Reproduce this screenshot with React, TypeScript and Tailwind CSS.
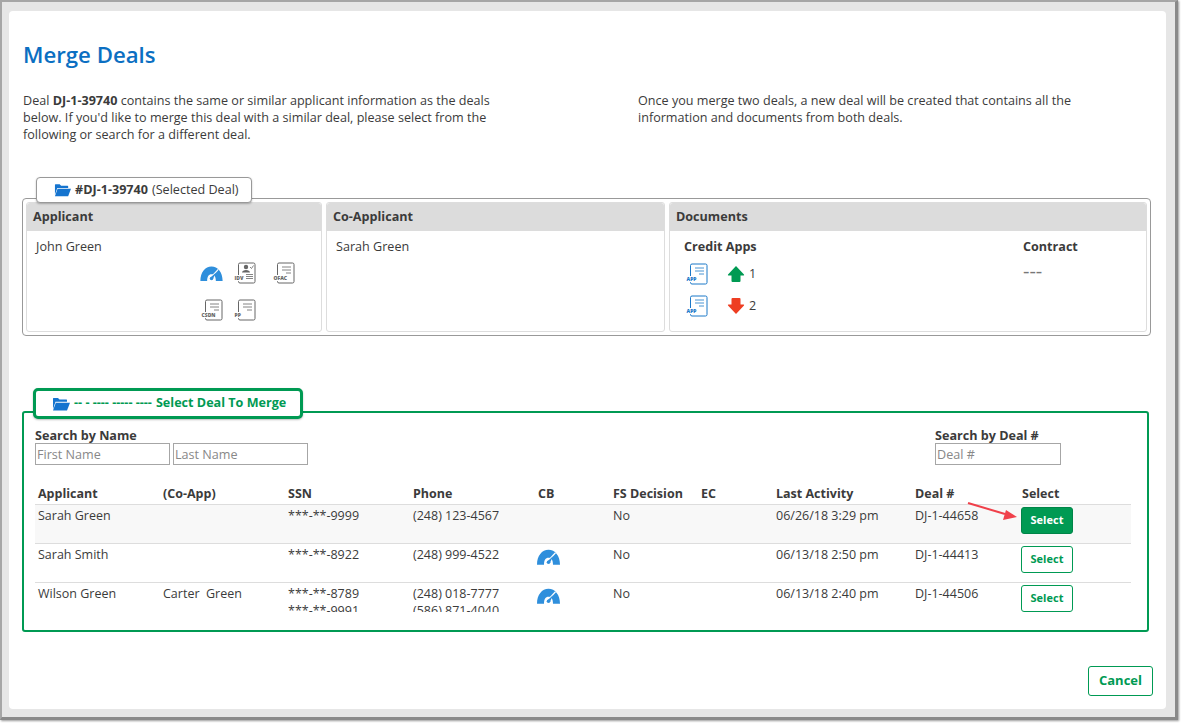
const font = { fontFamily: '"Open Sans", sans-serif' };

function Folder({ className }: { className: string }) {
  return (
    <svg viewBox="0 0 18 14" className={className}>
      <path d="M1 12 V1.500 Q1 1 1.500 1 H6 L7.500 2.500 H14.500 Q15 2.500 15 3 V4.800 H3.500 Z" fill="#1574cf" />
      <path d="M3.800 5.800 H18 L15 13.500 H1 Z" fill="#1574cf" />
    </svg>
  );
}

function Gauge({ className }: { className: string }) {
  return (
    <svg viewBox="0 0 23 15.500" className={className}>
      <path d="M0 15.500 C0 6.500 5 0.500 11.500 0.500 C18 0.500 23 6.500 23 15.500 L16 15.500 C16 11 14.500 8.500 11.500 8.500 C8.500 8.500 7 11 7 15.500 Z" fill="#2f8fdc" />
      <path d="M12.500 10 L18.500 3.500" stroke="#ffffff" strokeWidth="1.200" />
      <path d="M10.500 12 L16 7 L12.800 14 Z" fill="#2f8fdc" />
      <circle cx="11.500" cy="13" r="1.800" fill="#2f8fdc" />
    </svg>
  );
}

// document outline with a small label sitting over its lower left corner
function Doc({ label, labelW, person, blue }: { label: string; labelW: number; person?: boolean; blue?: boolean }) {
  const c = blue ? '#1b78c8' : '#666666';
  return (
    <svg viewBox="0 0 22 22" className="h-[22px] w-[22px] overflow-visible">
      <rect x="4.500" y="1" width="16.500" height="20" rx="1.500" fill="#ffffff" stroke={c} strokeWidth="1" />
      {person ? (
        <>
          <circle cx="12" cy="5" r="2.200" fill={c} />
          <path d="M8 10.500 C8 7 16 7 16 10.500 Z" fill={c} />
          <path d="M16 5 L17.500 6.500 L19.500 3.500" fill="none" stroke={c} strokeWidth="0.800" />
          <path d="M12 12.500 H19 M12 14.500 H19 M12 16.500 H19" stroke={c} strokeWidth="0.800" />
        </>
      ) : (
        <path d="M9 5 H18 M9 8 H18 M13 11 H18" stroke={c} strokeWidth="0.800" />
      )}
      <rect x="0" y="13" width={labelW + 1} height="6" fill="#ffffff" />
      <text x="0.500" y="18" fontSize="5" fontWeight="800" fill={c} fontFamily="Open Sans">{label}</text>
    </svg>
  );
}

function Arrow({ up }: { up?: boolean }) {
  return (
    <svg viewBox="0 0 18 18" className="h-[18px] w-[18px]">
      {up ? (
        <path d="M9 1 L17 9.500 Q17.500 10.500 16.500 10.500 L13.500 10.500 L13.500 16 Q13.500 17 12.500 17 L5.500 17 Q4.500 17 4.500 16 L4.500 10.500 L1.500 10.500 Q0.500 10.500 1 9.500 Z" fill="#009a53" />
      ) : (
        <path d="M9 17 L17 8.500 Q17.500 7.500 16.500 7.500 L13.500 7.500 L13.500 2 Q13.500 1 12.500 1 L5.500 1 Q4.500 1 4.500 2 L4.500 7.500 L1.500 7.500 Q0.500 7.500 1 8.500 Z" fill="#ee3e22" />
      )}
    </svg>
  );
}

function Panel({ title, className, children }: { title: string; className: string; children: React.ReactNode }) {
  return (
    <div className={`flex flex-col rounded-[3px] border border-[#dddddd] ${className}`}>
      <div className="flex h-[28px] items-center rounded-t-[3px] bg-[#dcdcdc] pl-[6px] text-[12.600px] font-bold text-[#3b3b3b]">{title}</div>
      <div className="flex-1">{children}</div>
    </div>
  );
}

const rows = [
  { name: 'Sarah Green', co: '', ssn: ['***-**-9999'], phone: ['(248) 123-4567'], cb: false, when: '06/26/18 3:29 pm', deal: 'DJ-1-44658', active: true },
  { name: 'Sarah Smith', co: '', ssn: ['***-**-8922'], phone: ['(248) 999-4522'], cb: true, when: '06/13/18 2:50 pm', deal: 'DJ-1-44413', active: false },
  { name: 'Wilson Green', co: 'Carter  Green', ssn: ['***-**-8789', '***-**-9991'], phone: ['(248) 018-7777', '(586) 871-4040'], cb: true, when: '06/13/18 2:40 pm', deal: 'DJ-1-44506', active: false },
];

const cols = 'grid grid-cols-[125px_125px_125px_125px_75px_88px_75px_139px_107px_110px]';

export default function App() {
  return (
    <div style={font} className="h-[727px] w-[1183px] overflow-hidden bg-white text-[#3b3b3b]">
      <div className="h-[720px] w-[1178px] border-l-2 border-t-2 border-r-[3px] border-b-[3px] border-l-[#a6a6a6] border-t-[#a6a6a6] border-r-[#8a8a8a] border-b-[#8a8a8a] bg-[#e6e6e6] pl-[7px] pt-[9px] shadow-[1px_1px_2px_rgba(0,0,0,0.4)]">
        <div className="flex h-[698px] w-[1157px] flex-col rounded-[4px] bg-white pl-[13px] pt-[29px]">
          <h1 className="pl-px text-[22.200px] font-semibold leading-[30px] text-[#0b6fc2]">Merge Deals</h1>

          <div className="mt-[22px] flex text-[12.600px] leading-[17px]">
            <p className="w-[616px] pl-px pr-[125px]">
              Deal <b>DJ-1-39740</b> contains the same or similar applicant information as the deals below. If you'd like to merge this deal with a similar deal, please select from the following or search for a different deal.
            </p>
            <p className="w-[480px]">Once you merge two deals, a new deal will be created that contains all the information and documents from both deals.</p>
          </div>

          <div className="relative mt-[55px] h-[138px] w-[1129px] rounded-[4px] border border-[#999999] p-[3px]">
            <div className="absolute left-[13px] top-[-22px] flex h-[26px] w-[216px] items-center rounded-[4px] border border-[#999999] bg-white pl-[17px] text-[12.600px] shadow-[0_1px_2px_rgba(0,0,0,0.25)]">
              <Folder className="mr-[4px] h-[14px] w-[17px]" />
              <b>#DJ-1-39740</b>
              <span className="ml-1">(Selected Deal)</span>
            </div>
            <div className="flex h-[130px] gap-[4px]">
              <Panel title="Applicant" className="w-[296px]">
                <div className="pl-[9px] pt-[7px] text-[12.600px] leading-[17px]">John Green</div>
                <div className="mt-[7px] flex items-start pl-[173px]">
                  <div className="flex h-[22px] w-[23px] items-center"><Gauge className="h-[15px] w-[23px]" /></div>
                  <div className="ml-[11px]"><Doc label="IDV" labelW={9} person /></div>
                  <div className="ml-[17px]"><Doc label="OFAC" labelW={14} /></div>
                </div>
                <div className="mt-[15px] flex items-start pl-[174px]">
                  <Doc label="CSDN" labelW={15} />
                  <div className="ml-[11px]"><Doc label="PP" labelW={7} /></div>
                </div>
              </Panel>
              <Panel title="Co-Applicant" className="w-[339px]">
                <div className="pl-[9px] pt-[7px] text-[12.600px] leading-[17px]">Sarah Green</div>
              </Panel>
              <Panel title="Documents" className="w-[478px]">
                <div className="flex pl-[14px] pt-[7px] text-[12.600px]">
                  <div className="w-[339px]">
                    <div className="font-bold leading-[17px]">Credit Apps</div>
                    <div className="mt-[3px] flex h-[32px] items-center pl-[2px]">
                      <Doc label="APP" labelW={10} blue />
                      <span className="ml-[19px]"><Arrow up /></span>
                      <span className="ml-[4px]">1</span>
                    </div>
                    <div className="flex h-[32px] items-center pl-[2px]">
                      <Doc label="APP" labelW={10} blue />
                      <span className="ml-[19px]"><Arrow /></span>
                      <span className="ml-[4px]">2</span>
                    </div>
                  </div>
                  <div>
                    <div className="font-bold leading-[17px]">Contract</div>
                    <div className="mt-[5px] text-[20px] leading-[22px] text-[#777777]">---</div>
                  </div>
                </div>
              </Panel>
            </div>
          </div>

          <div className="relative mt-[75px] h-[221px] w-[1127px] rounded-[3px] border-2 border-[#009a53] pl-[11px] pt-[15px]">
            <div className="absolute left-[9px] top-[-25px] flex h-[31px] w-[270px] items-center rounded-[5px] border-[3px] border-[#009a53] bg-white pl-[16px] text-[12.600px] font-bold text-[#009a53] shadow-[0_1px_2px_rgba(0,0,0,0.25)]">
              <Folder className="mr-[4px] h-[14px] w-[18px]" />
              <span>-- - ---- ----- ----</span>
              <span className="ml-1">Select Deal To Merge</span>
            </div>

            <div className="flex">
              <div className="w-[900px]">
                <div className="text-[12.600px] font-bold leading-[15px]">Search by Name</div>
                <div className="flex gap-[3px]">
                  <input readOnly placeholder="First Name" className="h-[22px] w-[135px] border border-[#a6a6a6] px-px text-[12.600px] placeholder:text-[#888888]" />
                  <input readOnly placeholder="Last Name" className="h-[22px] w-[135px] border border-[#a6a6a6] px-px text-[12.600px] placeholder:text-[#888888]" />
                </div>
              </div>
              <div>
                <div className="text-[12.600px] font-bold leading-[15px]">Search by Deal #</div>
                <input readOnly placeholder="Deal #" className="block h-[22px] w-[126px] border border-[#a6a6a6] px-px text-[12.600px] placeholder:text-[#888888]" />
              </div>
            </div>

            <div className="mt-[20px] w-[1096px] text-[12.500px]">
              <div className={`${cols} h-[20px] border-b border-[#dddddd] pl-[3px] font-bold leading-[17px]`}>
                <div>Applicant</div>
                <div>(Co-App)</div>
                <div>SSN</div>
                <div>Phone</div>
                <div>CB</div>
                <div>FS Decision</div>
                <div>EC</div>
                <div>Last Activity</div>
                <div>Deal #</div>
                <div>Select</div>
              </div>
              {rows.map((r, i) => (
                <div key={r.deal} className={`${cols} h-[39px] pl-[3px] ${i < 2 ? 'border-b border-[#dddddd]' : ''} ${r.active ? 'bg-[#f8f8f8]' : ''}`}>
                  <div className="pt-[2px] leading-[17px]">{r.name}</div>
                  <div className="whitespace-pre pt-[2px] leading-[17px]">{r.co}</div>
                  <div className="h-[29px] overflow-hidden pt-[2px] leading-[17px]">{r.ssn.map((s) => <div key={s}>{s}</div>)}</div>
                  <div className="h-[29px] overflow-hidden pt-[2px] leading-[17px]">{r.phone.map((s) => <div key={s}>{s}</div>)}</div>
                  <div className="-ml-px pt-[5px]">{r.cb && <Gauge className="h-[16px] w-[23px]" />}</div>
                  <div className="pt-[2px] leading-[17px]">No</div>
                  <div></div>
                  <div className="pt-[2px] leading-[17px]">{r.when}</div>
                  <div className="pt-[2px] leading-[17px]">{r.deal}</div>
                  <div className="-ml-px pt-[2px]">
                    <button className={`h-[27px] w-[52px] rounded-[3px] border text-[11px] font-bold ${r.active ? 'border-[#008548] bg-[#009a53] text-white' : 'border-[#009a53] bg-white text-[#009a53]'}`}>Select</button>
                  </div>
                </div>
              ))}
            </div>

            <svg viewBox="0 0 52 20" className="absolute left-[943px] top-[88px] h-[20px] w-[52px]">
              <path d="M1 2 L38 13" stroke="#f0404a" strokeWidth="2" />
              <path d="M50 16 L36 19 L39 9 Z" fill="#f0404a" />
            </svg>
          </div>

          <div className="mt-[34px] flex w-[1131px] justify-end">
            <button className="h-[30px] w-[65px] rounded-[3px] border border-[#009a53] text-[13px] font-bold text-[#009a53]">Cancel</button>
          </div>
        </div>
      </div>
    </div>
  );
}
